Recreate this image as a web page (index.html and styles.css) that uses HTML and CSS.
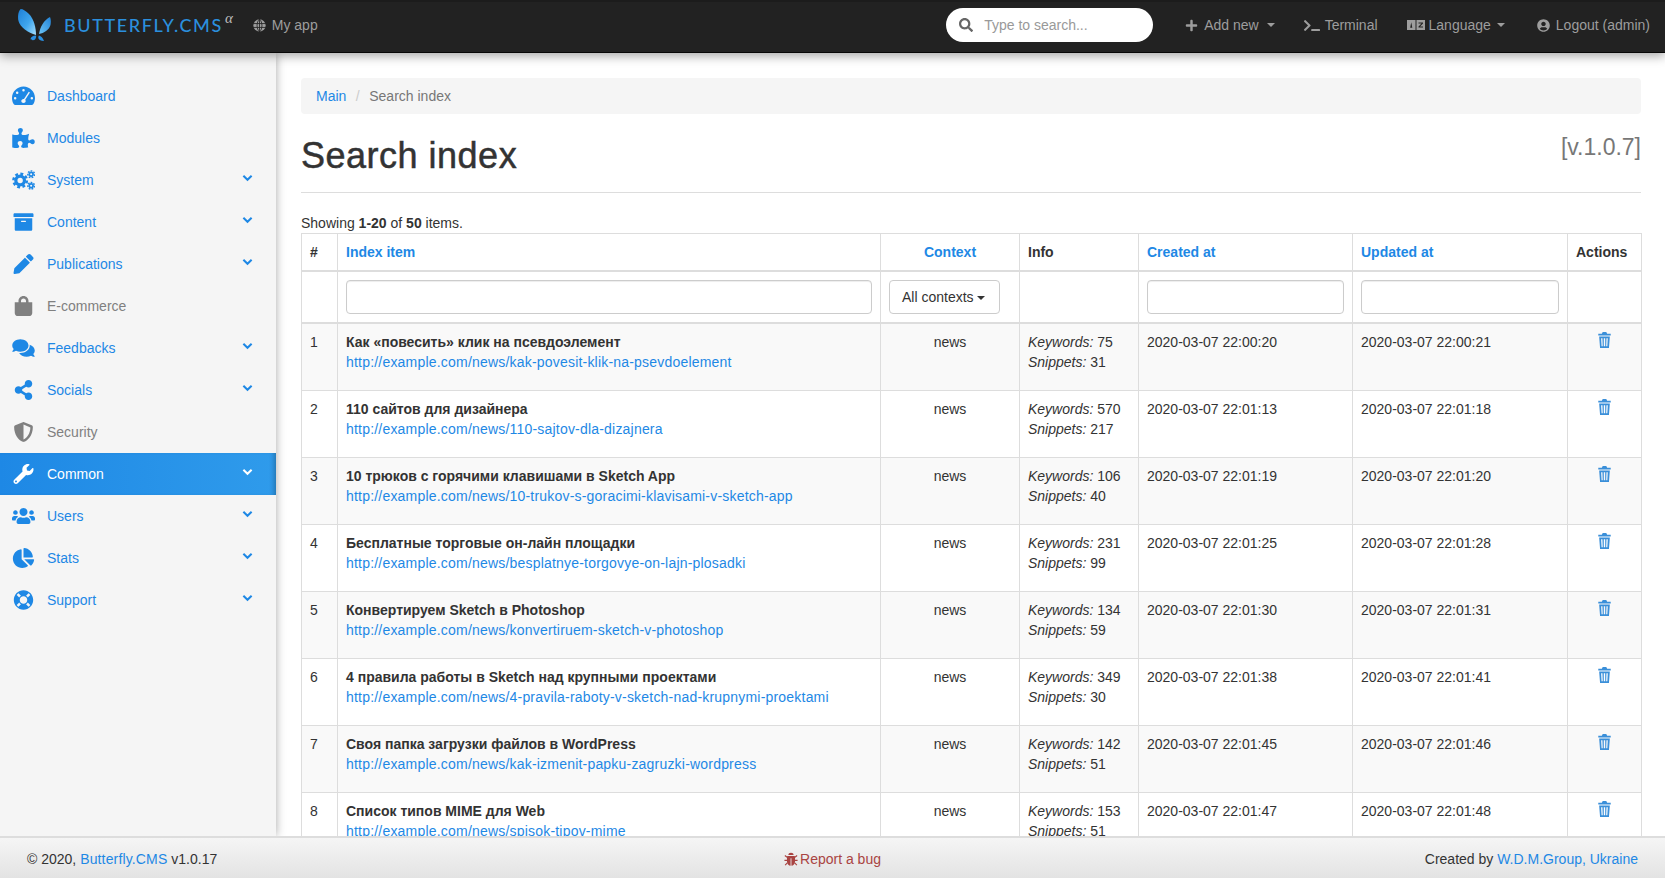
FILE: index.html
```html
<!DOCTYPE html>
<html lang="en">
<head>
    <meta charset="UTF-8">
    <meta name="viewport" content="width=device-width, initial-scale=1.0">
    <title>Search index</title>
    <link rel="stylesheet" href="styles.css">
</head>
<body>
<svg class="sprites" width="0" height="0">
    <defs>
        <linearGradient id="wing" x1="0" y1="0" x2="1" y2="1">
            <stop offset="0" stop-color="#1e7fd6"/>
            <stop offset="0.55" stop-color="#3fa6ee"/>
            <stop offset="1" stop-color="#a5defc"/>
        </linearGradient>
        <linearGradient id="wing2" x1="1" y1="0" x2="0" y2="1">
            <stop offset="0" stop-color="#2183d8"/>
            <stop offset="1" stop-color="#6cc3f5"/>
        </linearGradient>
        <symbol id="i-down" viewBox="0 0 12 8"><polyline points="1.5,1.5 6,6 10.5,1.5" fill="none" stroke="currentColor" stroke-width="2.2"/></symbol>
        <symbol id="i-trash" viewBox="0 0 14 18"><path fill="currentColor" d="M5 0h4l1 2h4v2H0V2h4zM1 5h12l-1 13H2zm2.200 2l.5 9h1.300l-.3-9zm3 0v9h1.600V7zm3 0l-.3 9h1.300l.5-9z"/></symbol>
    </defs>
</svg>

<nav class="navbar">
    <a class="brand" href="#">
        <svg class="brand-logo" viewBox="16 7 38 36">
            <path fill="url(#wing)" d="M20.600 9C18 12 17.500 17 18.500 21C20 27 28 33 36 35C36 28 34 19 29 14C26 11 23 9 20.600 9z"/>
            <path fill="url(#wing2)" d="M50 17C44 20 40 27 39 34C44 33 49 30 50.500 25C51 22 51 19 50 17z"/>
            <path fill="#2a90e2" d="M36 35.500C33 35.500 31 37 30.500 39C31 40.500 34 40.500 35 39.500C36 38 36.500 36.500 36 35.500zM39 35.500C41 36 43 38 44 41C41 41 39 40 38.500 38.500C38 37 38.500 36 39 35.500z"/>
        </svg>
        <span class="brand-name">BUTTERFLY.CMS</span><sup class="brand-alpha">&alpha;</sup>
    </a>
    <a class="nav-link app-link" href="#">
        <svg class="nav-icon globe" viewBox="0 0 20 20"><circle cx="10" cy="10" r="9.500" fill="currentColor"/><path fill="none" stroke="#222" stroke-width="1.300" d="M0 7h20M0 13h20M10 0v20M10 0C5 5 5 15 10 20M10 0c5 5 5 15 0 20"/></svg>
        My app
    </a>
    <form class="nav-search">
        <svg class="search-icon" viewBox="0 0 512 512"><path fill="currentColor" d="M505 442.700L405.300 343c-4.500-4.500-10.600-7-17-7H372c27.600-35.300 44-79.700 44-128C416 93.100 322.900 0 208 0S0 93.100 0 208s93.100 208 208 208c48.300 0 92.700-16.400 128-44v16.300c0 6.400 2.500 12.500 7 17l99.700 99.700c9.400 9.400 24.600 9.400 33.900 0l28.300-28.300c9.400-9.400 9.400-24.600.1-34zM208 336c-70.700 0-128-57.200-128-128 0-70.700 57.200-128 128-128 70.700 0 128 57.200 128 128 0 70.700-57.200 128-128 128z"/></svg>
        <input type="text" placeholder="Type to search...">
    </form>
    <a class="nav-link add-link" href="#">
        <svg class="nav-icon" viewBox="0 0 448 512"><path fill="currentColor" d="M416 208H272V64c0-17.670-14.330-32-32-32h-32c-17.670 0-32 14.330-32 32v144H32c-17.670 0-32 14.330-32 32v32c0 17.670 14.330 32 32 32h144v144c0 17.670 14.330 32 32 32h32c17.670 0 32-14.330 32-32V304h144c17.670 0 32-14.330 32-32v-32c0-17.670-14.330-32-32-32z"/></svg>
        Add new <span class="caret"></span>
    </a>
    <a class="nav-link terminal-link" href="#">
        <svg class="nav-icon terminal" viewBox="0 0 640 512"><path fill="currentColor" d="M257.981 272.971L63.638 467.314c-9.373 9.373-24.569 9.373-33.941 0L7.029 444.647c-9.357-9.357-9.375-24.522-.04-33.901L161.011 256 6.990 101.255c-9.335-9.379-9.317-24.544.04-33.901l22.667-22.667c9.373-9.373 24.569-9.373 33.941 0L257.981 239.030c9.373 9.372 9.373 24.568 0 33.941zM640 456v-32c0-13.255-10.745-24-24-24H312c-13.255 0-24 10.745-24 24v32c0 13.255 10.745 24 24 24h304c13.255 0 24-10.745 24-24z"/></svg>
        Terminal
    </a>
    <a class="nav-link lang-link" href="#">
        <svg class="nav-icon lang" viewBox="0 0 18 10"><path fill="currentColor" fill-rule="evenodd" d="M0 0h8.500v10H0zM3.200 7.800L4.250 2.200 5.300 7.800M9.500 0H18v10H9.500zM11.500 2.500h4.500v1l-3 3h3v1h-4.500v-1l3-3h-3z"/></svg>
        Language <span class="caret"></span>
    </a>
    <a class="nav-link logout-link" href="#">
        <svg class="nav-icon" viewBox="0 0 496 512"><path fill="currentColor" d="M248 8C111 8 0 119 0 256s111 248 248 248 248-111 248-248S385 8 248 8zm0 96c48.600 0 88 39.400 88 88s-39.400 88-88 88-88-39.400-88-88 39.400-88 88-88zm0 344c-58.700 0-111.300-26.600-146.500-68.200 18.800-35.400 55.600-59.800 98.500-59.800 2.400 0 4.800.4 7.100 1.100 13 4.200 26.600 6.900 40.900 6.900 14.300 0 28-2.700 40.900-6.900 2.300-.7 4.700-1.100 7.100-1.100 42.900 0 79.700 24.400 98.500 59.800C359.300 421.400 306.700 448 248 448z"/></svg>
        Logout (admin)
    </a>
</nav>

<div class="wrapper">
    <aside class="sidebar">
        <ul class="side-menu">
            <li><a href="#">
                <svg class="side-icon" viewBox="0 0 24 20"><path fill="currentColor" fill-rule="evenodd" d="M12 0C5.400 0 0 5.400 0 12c0 2.300.6 4.400 1.700 6.300.4.700 1 1.100 1.800 1.100h17c.8 0 1.400-.4 1.800-1.100C23.400 16.400 24 14.300 24 12 24 5.400 18.600 0 12 0zm0 2.600a1.300 1.300 0 1 1 0 2.600 1.300 1.300 0 0 1 0-2.600zM5.400 5.400a1.300 1.300 0 1 1 0 2.600 1.300 1.300 0 0 1 0-2.600zM3.300 11a1.300 1.300 0 1 1 0 2.600 1.300 1.300 0 0 1 0-2.600zm17.400 0a1.300 1.300 0 1 1 0 2.600 1.300 1.300 0 0 1 0-2.600zM17.500 5.500l1.200.8-4.900 7.600c.3.400.5.900.5 1.400 0 1.200-1 2.100-2.300 2.100S9.700 16.500 9.700 15.300s1-2.300 2.300-2.300c.2 0 .3 0 .5.100z"/></svg>
                Dashboard
            </a></li>
            <li><a href="#">
                <svg class="side-icon" viewBox="0 0 576 512"><path fill="currentColor" d="M519.442 288.651c-41.519 0-59.500 31.593-82.058 31.593C377.409 320.244 432 144 432 144s-196.288 80-196.288-3.297c0-35.827 36.288-46.250 36.288-85.985C272 19.216 243.885 0 210.539 0c-34.654 0-66.366 18.891-66.366 56.346 0 41.364 31.711 59.277 31.711 81.750C175.885 207.719 0 166.758 0 166.758v333.237s178.635 41.047 178.635-28.662c0-22.473-40-40.107-40-81.471 0-37.456 29.250-56.346 63.577-56.346 33.673 0 61.788 19.216 61.788 54.717 0 39.735-36.288 50.158-36.288 85.985 0 60.803 129.675 25.730 181.230 25.730 0 0-34.725-120.101 25.827-120.101 35.962 0 46.423 36.152 86.308 36.152C556.712 416 576 387.990 576 354.443c0-33.901-18.962-65.792-56.558-65.792z"/></svg>
                Modules
            </a></li>
            <li class="has-sub"><a href="#">
                <svg class="side-icon" viewBox="0 0 24 20"><g fill="none" stroke="currentColor"><circle cx="8.500" cy="10.500" r="4.500" stroke-width="3.400"/><circle cx="8.500" cy="10.500" r="7" stroke-width="2.600" stroke-dasharray="3 2.500"/><circle cx="20" cy="4" r="2" stroke-width="1.800"/><circle cx="20" cy="4" r="3.500" stroke-width="1.500" stroke-dasharray="1.800 1.300"/><circle cx="20" cy="16" r="2" stroke-width="1.800"/><circle cx="20" cy="16" r="3.500" stroke-width="1.500" stroke-dasharray="1.800 1.300"/></g></svg>
                System
                <svg class="side-arrow"><use href="#i-down"/></svg>
            </a></li>
            <li class="has-sub"><a href="#">
                <svg class="side-icon" viewBox="0 0 512 512"><path fill="currentColor" d="M32 448c0 17.700 14.300 32 32 32h384c17.700 0 32-14.300 32-32V160H32v288zm160-212c0-6.600 5.400-12 12-12h104c6.600 0 12 5.400 12 12v8c0 6.600-5.400 12-12 12H204c-6.600 0-12-5.400-12-12v-8zM480 32H32C14.300 32 0 46.300 0 64v48c0 8.800 7.200 16 16 16h480c8.800 0 16-7.200 16-16V64c0-17.700-14.300-32-32-32z"/></svg>
                Content
                <svg class="side-arrow"><use href="#i-down"/></svg>
            </a></li>
            <li class="has-sub"><a href="#">
                <svg class="side-icon" viewBox="0 0 512 512"><path fill="currentColor" d="M497.900 142.100l-46.100 46.100c-4.700 4.700-12.300 4.700-17 0l-111-111c-4.700-4.700-4.700-12.300 0-17l46.100-46.100c18.700-18.700 49.100-18.700 67.900 0l60.100 60.100c18.800 18.700 18.800 49.100 0 67.900zM284.200 99.800L21.600 362.400.4 483.900c-2.900 16.400 11.400 30.600 27.800 27.800l121.500-21.300 262.600-262.600c4.700-4.700 4.700-12.300 0-17l-111-111c-4.800-4.700-12.400-4.700-17.100 0z"/></svg>
                Publications
                <svg class="side-arrow"><use href="#i-down"/></svg>
            </a></li>
            <li class="muted"><a href="#">
                <svg class="side-icon" viewBox="0 0 448 512"><path fill="currentColor" fill-rule="evenodd" d="M352 160v-32C352 57.420 294.579 0 224 0 153.420 0 96 57.420 96 128v32H0v272c0 44.183 35.817 80 80 80h288c44.183 0 80-35.817 80-80V160h-96zm-192-32c0-35.290 28.710-64 64-64s64 28.710 64 64v32H160v-32z"/></svg>
                E-commerce
            </a></li>
            <li class="has-sub"><a href="#">
                <svg class="side-icon" viewBox="0 0 576 512"><path fill="currentColor" d="M416 192c0-88.400-93.100-160-208-160S0 103.600 0 192c0 34.300 14.100 65.900 38 92-13.400 30.200-35.500 54.200-35.800 54.500-2.200 2.300-2.800 5.700-1.500 8.700S4.800 352 8 352c36.600 0 66.900-12.300 88.700-25 32.200 15.700 70.300 25 111.300 25 114.900 0 208-71.600 208-160zm122 220c23.900-26 38-57.700 38-92 0-66.900-53.500-124.200-129.300-148.100.9 6.600 1.300 13.300 1.300 20.100 0 105.900-107.700 192-240 192-10.800 0-21.300-.8-31.700-1.900C207.800 439.600 281.800 480 368 480c41 0 79.100-9.200 111.300-25 21.800 12.700 52.100 25 88.700 25 3.200 0 6.100-1.900 7.300-4.800 1.300-2.900.7-6.300-1.500-8.700-.3-.3-22.400-24.200-35.800-54.500z"/></svg>
                Feedbacks
                <svg class="side-arrow"><use href="#i-down"/></svg>
            </a></li>
            <li class="has-sub"><a href="#">
                <svg class="side-icon" viewBox="0 0 448 512"><path fill="currentColor" d="M352 320c-22.608 0-43.387 7.819-59.790 20.895l-102.486-64.054a96.551 96.551 0 0 0 0-41.683l102.486-64.054C308.613 184.181 329.392 192 352 192c53.019 0 96-42.981 96-96S405.019 0 352 0s-96 42.981-96 96c0 7.158.79 14.130 2.276 20.841L155.790 180.895C139.387 167.819 118.608 160 96 160c-53.019 0-96 42.981-96 96s42.981 96 96 96c22.608 0 43.387-7.819 59.790-20.895l102.486 64.054A96.301 96.301 0 0 0 256 416c0 53.019 42.981 96 96 96s96-42.981 96-96-42.981-96-96-96z"/></svg>
                Socials
                <svg class="side-arrow"><use href="#i-down"/></svg>
            </a></li>
            <li class="muted"><a href="#">
                <svg class="side-icon" viewBox="0 0 512 512"><path fill="currentColor" d="M466.500 83.700l-192-80a48.150 48.150 0 0 0-36.900 0l-192 80C27.700 91.100 16 108.600 16 128c0 198.500 114.500 335.700 221.500 380.300 11.800 4.900 25.100 4.900 36.900 0C360.100 472.600 496 349.300 496 128c0-19.400-11.700-36.900-29.500-44.300zM256.100 446.300l-.1-381 175.900 73.300c-3.300 151.400-82.100 261.100-175.800 307.700z"/></svg>
                Security
            </a></li>
            <li class="has-sub active"><a href="#">
                <svg class="side-icon" viewBox="0 0 512 512"><path fill="currentColor" d="M507.730 109.100c-2.240-9.030-13.540-12.090-20.120-5.510l-74.360 74.360-67.880-11.310-11.310-67.880 74.360-74.360c6.620-6.620 3.430-17.900-5.660-20.160-47.380-11.740-99.550.91-136.580 37.930-39.640 39.640-50.550 97.100-34.050 147.200L18.740 402.760c-24.990 24.990-24.990 65.510 0 90.500 24.990 24.990 65.510 24.990 90.500 0l213.210-213.210c50.120 16.710 107.470 5.680 147.370-34.220 37.070-37.070 49.700-89.320 37.910-136.730zM64 472c-13.250 0-24-10.750-24-24 0-13.260 10.750-24 24-24s24 10.740 24 24c0 13.250-10.750 24-24 24z"/></svg>
                Common
                <svg class="side-arrow"><use href="#i-down"/></svg>
            </a></li>
            <li class="has-sub"><a href="#">
                <svg class="side-icon" viewBox="0 0 640 512"><path fill="currentColor" d="M96 224c35.300 0 64-28.700 64-64s-28.700-64-64-64-64 28.700-64 64 28.700 64 64 64zm448 0c35.300 0 64-28.700 64-64s-28.700-64-64-64-64 28.700-64 64 28.700 64 64 64zm32 32h-64c-17.600 0-33.500 7.100-45.100 18.600 40.300 22.100 68.900 62 75.100 109.400h66c17.700 0 32-14.300 32-32v-32c0-35.300-28.700-64-64-64zm-256 0c61.900 0 112-50.100 112-112S381.900 32 320 32 208 82.100 208 144s50.100 112 112 112zm76.800 32h-8.300c-20.800 10-43.900 16-68.500 16s-47.600-6-68.500-16h-8.300C179.600 288 128 339.600 128 403.200V432c0 26.500 21.500 48 48 48h288c26.500 0 48-21.500 48-48v-28.800c0-63.600-51.600-115.200-115.200-115.200zm-223.700-13.400C161.500 263.100 145.600 256 128 256H64c-35.300 0-64 28.700-64 64v32c0 17.700 14.300 32 32 32h65.900c6.300-47.400 34.900-87.300 75.200-109.400z"/></svg>
                Users
                <svg class="side-arrow"><use href="#i-down"/></svg>
            </a></li>
            <li class="has-sub"><a href="#">
                <svg class="side-icon" viewBox="0 0 544 512"><path fill="currentColor" d="M527.790 288H290.500l158.030 158.030c6.040 6.040 15.980 6.530 22.190.68 38.700-36.460 65.320-85.610 73.130-140.860 1.340-9.460-6.510-17.850-16.060-17.850zm-15.830-64.800C503.720 103.740 408.260 8.280 288.800.04 279.680-.59 272 7.100 272 16.240V240h223.770c9.140 0 16.820-7.680 16.190-16.800zM224 288V50.710c0-9.550-8.390-17.400-17.840-16.060C86.990 51.490-4.100 155.600.14 280.370 4.500 408.510 114.830 513.590 243.030 511.980c50.400-.63 96.970-16.870 135.260-44.030 7.900-5.600 8.420-17.230 1.570-24.080L224 288z"/></svg>
                Stats
                <svg class="side-arrow"><use href="#i-down"/></svg>
            </a></li>
            <li class="has-sub"><a href="#">
                <svg class="side-icon" viewBox="0 0 512 512"><path fill="currentColor" d="M256 8C119.033 8 8 119.033 8 256s111.033 248 248 248 248-111.033 248-248S392.967 8 256 8zm173.696 119.559l-63.399 63.399c-10.987-18.559-26.670-34.252-45.255-45.255l63.399-63.399a218.396 218.396 0 0 1 45.255 45.255zM256 352c-53.019 0-96-42.981-96-96s42.981-96 96-96 96 42.981 96 96-42.981 96-96 96zM127.559 82.304l63.399 63.399c-18.559 10.987-34.252 26.670-45.255 45.255l-63.399-63.399a218.372 218.372 0 0 1 45.255-45.255zM82.304 384.441l63.399-63.399c10.987 18.559 26.670 34.252 45.255 45.255l-63.399 63.399a218.396 218.396 0 0 1-45.255-45.255zm302.137 45.255l-63.399-63.399c18.559-10.987 34.252-26.670 45.255-45.255l63.399 63.399a218.403 218.403 0 0 1-45.255 45.255z"/></svg>
                Support
                <svg class="side-arrow"><use href="#i-down"/></svg>
            </a></li>
        </ul>
    </aside>

    <main class="content">
        <ol class="breadcrumb">
            <li><a href="#">Main</a></li>
            <li class="current">Search index</li>
        </ol>

        <div class="page-head">
            <h1>Search index</h1>
            <span class="version">[v.1.0.7]</span>
        </div>

        <div class="summary">Showing <b>1-20</b> of <b>50</b> items.</div>

        <table class="grid">
            <colgroup>
                <col class="col-num">
                <col class="col-item">
                <col class="col-context">
                <col class="col-info">
                <col class="col-date">
                <col class="col-date2">
                <col class="col-actions">
            </colgroup>
            <thead>
                <tr>
                    <th>#</th>
                    <th><a href="#">Index item</a></th>
                    <th class="center"><a href="#">Context</a></th>
                    <th>Info</th>
                    <th><a href="#">Created at</a></th>
                    <th><a href="#">Updated at</a></th>
                    <th>Actions</th>
                </tr>
                <tr class="filters">
                    <td></td>
                    <td><input type="text" class="form-control"></td>
                    <td><button type="button" class="btn-drop">All contexts <span class="caret"></span></button></td>
                    <td></td>
                    <td><input type="text" class="form-control"></td>
                    <td><input type="text" class="form-control"></td>
                    <td></td>
                </tr>
            </thead>
            <tbody>
                <tr>
                    <td>1</td>
                    <td><b>Как «повесить» клик на псевдоэлемент</b><p><a href="#">http://example.com/news/kak-povesit-klik-na-psevdoelement</a></p></td>
                    <td class="center">news</td>
                    <td><i>Keywords:</i> 75<br><i>Snippets:</i> 31</td>
                    <td>2020-03-07 22:00:20</td>
                    <td>2020-03-07 22:00:21</td>
                    <td class="center"><a href="#"><svg class="trash"><use href="#i-trash"/></svg></a></td>
                </tr>
                <tr>
                    <td>2</td>
                    <td><b>110 сайтов для дизайнера</b><p><a href="#">http://example.com/news/110-sajtov-dla-dizajnera</a></p></td>
                    <td class="center">news</td>
                    <td><i>Keywords:</i> 570<br><i>Snippets:</i> 217</td>
                    <td>2020-03-07 22:01:13</td>
                    <td>2020-03-07 22:01:18</td>
                    <td class="center"><a href="#"><svg class="trash"><use href="#i-trash"/></svg></a></td>
                </tr>
                <tr>
                    <td>3</td>
                    <td><b>10 трюков с горячими клавишами в Sketch App</b><p><a href="#">http://example.com/news/10-trukov-s-goracimi-klavisami-v-sketch-app</a></p></td>
                    <td class="center">news</td>
                    <td><i>Keywords:</i> 106<br><i>Snippets:</i> 40</td>
                    <td>2020-03-07 22:01:19</td>
                    <td>2020-03-07 22:01:20</td>
                    <td class="center"><a href="#"><svg class="trash"><use href="#i-trash"/></svg></a></td>
                </tr>
                <tr>
                    <td>4</td>
                    <td><b>Бесплатные торговые он-лайн площадки</b><p><a href="#">http://example.com/news/besplatnye-torgovye-on-lajn-plosadki</a></p></td>
                    <td class="center">news</td>
                    <td><i>Keywords:</i> 231<br><i>Snippets:</i> 99</td>
                    <td>2020-03-07 22:01:25</td>
                    <td>2020-03-07 22:01:28</td>
                    <td class="center"><a href="#"><svg class="trash"><use href="#i-trash"/></svg></a></td>
                </tr>
                <tr>
                    <td>5</td>
                    <td><b>Конвертируем Sketch в Photoshop</b><p><a href="#">http://example.com/news/konvertiruem-sketch-v-photoshop</a></p></td>
                    <td class="center">news</td>
                    <td><i>Keywords:</i> 134<br><i>Snippets:</i> 59</td>
                    <td>2020-03-07 22:01:30</td>
                    <td>2020-03-07 22:01:31</td>
                    <td class="center"><a href="#"><svg class="trash"><use href="#i-trash"/></svg></a></td>
                </tr>
                <tr>
                    <td>6</td>
                    <td><b>4 правила работы в Sketch над крупными проектами</b><p><a href="#">http://example.com/news/4-pravila-raboty-v-sketch-nad-krupnymi-proektami</a></p></td>
                    <td class="center">news</td>
                    <td><i>Keywords:</i> 349<br><i>Snippets:</i> 30</td>
                    <td>2020-03-07 22:01:38</td>
                    <td>2020-03-07 22:01:41</td>
                    <td class="center"><a href="#"><svg class="trash"><use href="#i-trash"/></svg></a></td>
                </tr>
                <tr>
                    <td>7</td>
                    <td><b>Своя папка загрузки файлов в WordPress</b><p><a href="#">http://example.com/news/kak-izmenit-papku-zagruzki-wordpress</a></p></td>
                    <td class="center">news</td>
                    <td><i>Keywords:</i> 142<br><i>Snippets:</i> 51</td>
                    <td>2020-03-07 22:01:45</td>
                    <td>2020-03-07 22:01:46</td>
                    <td class="center"><a href="#"><svg class="trash"><use href="#i-trash"/></svg></a></td>
                </tr>
                <tr>
                    <td>8</td>
                    <td><b>Список типов MIME для Web</b><p><a href="#">http://example.com/news/spisok-tipov-mime</a></p></td>
                    <td class="center">news</td>
                    <td><i>Keywords:</i> 153<br><i>Snippets:</i> 51</td>
                    <td>2020-03-07 22:01:47</td>
                    <td>2020-03-07 22:01:48</td>
                    <td class="center"><a href="#"><svg class="trash"><use href="#i-trash"/></svg></a></td>
                </tr>
            </tbody>
        </table>
    </main>
</div>

<footer class="footer">
    <div class="foot-left">&copy; 2020, <a href="#">Butterfly.CMS</a> v1.0.17</div>
    <a class="foot-bug" href="#">
        <svg class="bug-icon" viewBox="0 0 16 16"><path fill="currentColor" d="M5 3.500C5 1.800 6.300.8 8 .8s3 1 3 2.700zM4.200 4.500h7.600c.5 0 .8.400.8.800V11c0 2.600-2 4.400-4.100 4.600V7H7.500v8.600C5.400 15.400 3.400 13.600 3.400 11V5.300c0-.4.300-.8.800-.8z"/><path fill="none" stroke="currentColor" stroke-width="1.300" d="M3.500 6L1 4M12.500 6L15 4M3.500 9.500H.5M12.500 9.500h3M3.800 12.500L1.300 15M12.200 12.500l2.500 2.500"/></svg>Report a bug
    </a>
    <div class="foot-right">Created by <a href="#">W.D.M.Group, Ukraine</a></div>
</footer>
</body>
</html>
```

FILE: styles.css
```css
* {
    box-sizing: border-box;
}
html,
body {
    height: 100%;
}
body {
    margin: 0;
    display: flex;
    flex-direction: column;
    overflow: hidden;
    font-family: 'Liberation Sans', Arial, sans-serif;
    font-size: 14px;
    line-height: 20px;
    color: #333;
    background-color: #fff;
}
a {
    color: #1e88e5;
    text-decoration: none;
}
.sprites {
    position: absolute;
}

/* top bar */
.navbar {
    position: relative;
    z-index: 3;
    flex: 0 0 53px;
    display: flex;
    align-items: center;
    padding: 0 15px 2px 0;
    background-color: #222;
    border-bottom: 1px solid #080808;
    box-shadow: inset 0 2px 0 #1c1c1c, 0 3px 10px rgba(0, 0, 0, 0.35);
}
.brand {
    display: flex;
    align-items: center;
    margin-left: 16px;
    color: #2b8fdd;
}
.brand-logo {
    width: 38px;
    height: 36px;
    margin-right: 10px;
}
.brand-name {
    font-family: Lato, 'Liberation Sans', sans-serif;
    font-size: 18px;
    font-weight: 500;
    letter-spacing: 1.6px;
}
.brand-alpha {
    align-self: flex-start;
    margin: 1px 0 0 2px;
    font-family: 'Liberation Serif', serif;
    font-size: 15px;
    font-style: italic;
    color: #bbb;
}
.nav-link {
    display: flex;
    align-items: center;
    white-space: nowrap;
    color: #9d9d9d;
}
.nav-icon {
    width: 13px;
    height: 13px;
    margin-right: 6px;
}
.app-link {
    margin-left: 20px;
}
.nav-search {
    position: relative;
    width: 207px;
    height: 34px;
    margin-left: auto;
}
.nav-search input {
    width: 100%;
    height: 100%;
    padding: 0 16px 0 38px;
    border: 0;
    border-radius: 17px;
    font: inherit;
    color: #555;
    background-color: #fff;
}
.nav-search input::placeholder {
    color: #999;
}
.search-icon {
    position: absolute;
    left: 13px;
    top: 10px;
    width: 14px;
    height: 14px;
    color: #666;
}
.add-link {
    margin-left: 32px;
}
.add-link .caret {
    margin-left: 8px;
}
.terminal-link {
    margin-left: 29px;
}
.terminal {
    width: 16px;
    height: 13px;
    margin-right: 5px;
}
.lang-link {
    margin-left: 29px;
}
.lang {
    width: 18px;
    height: 10px;
    margin-right: 4px;
}
.logout-link {
    margin-left: 32px;
}
.caret {
    display: inline-block;
    width: 0;
    height: 0;
    margin-left: 6px;
    border-top: 4px solid currentColor;
    border-left: 4px solid transparent;
    border-right: 4px solid transparent;
}

/* layout */
.wrapper {
    flex: 1;
    display: flex;
    min-height: 0;
}
.sidebar {
    position: relative;
    z-index: 2;
    flex: 0 0 276px;
    padding-top: 22px;
    background-color: #f5f5f5;
    box-shadow: 0 0 9px rgba(0, 0, 0, 0.35);
}
.side-menu {
    list-style: none;
    margin: 0;
    padding: 0;
}
.side-menu a {
    position: relative;
    display: flex;
    align-items: center;
    height: 42px;
    padding-left: 12px;
}
.side-icon {
    flex: 0 0 23px;
    height: 20px;
    margin-right: 12px;
}
.side-arrow {
    position: absolute;
    left: 242px;
    top: 15px;
    width: 11px;
    height: 8px;
}
.muted a {
    color: #808080;
}
.active a {
    color: #fff;
    background: linear-gradient(to right, #1e88e5, #2f9beb);
    box-shadow: inset -5px 0 5px -3px rgba(0, 0, 0, 0.25);
}
.content {
    flex: 1;
    min-width: 0;
    padding: 25px 24px 0 25px;
    overflow: hidden;
}
.breadcrumb {
    display: flex;
    list-style: none;
    margin: 0 0 22px;
    padding: 8px 15px;
    border-radius: 4px;
    background-color: #f5f5f5;
}
.breadcrumb .current {
    color: #777;
}
.breadcrumb .current::before {
    content: "/";
    padding: 0 9.5px;
    color: #ccc;
}
.page-head {
    display: flex;
    justify-content: space-between;
    height: 57px;
    margin-bottom: 20px;
    border-bottom: 1px solid #ddd;
}
.page-head h1 {
    margin: 0;
    font-size: 36px;
    font-weight: 400;
    line-height: 40px;
    letter-spacing: 0.5px;
    -webkit-text-stroke: 0.5px #333;
}
.version {
    font-size: 23px;
    line-height: 22px;
    color: #777;
}
.summary {
    height: 20px;
}

/* table */
.grid {
    width: 1340px;
    table-layout: fixed;
    border-collapse: collapse;
}
.col-num {
    width: 36px;
}
.col-item {
    width: 543px;
}
.col-context {
    width: 139px;
}
.col-info {
    width: 119px;
}
.col-date {
    width: 214px;
}
.col-date2 {
    width: 215px;
}
.col-actions {
    width: 74px;
}
.grid th,
.grid td {
    padding: 8px;
    border: 1px solid #ddd;
    text-align: left;
    vertical-align: top;
}
.grid thead th,
.grid .filters td {
    border-bottom-width: 2px;
}
.grid .center {
    text-align: center;
}
.grid p {
    margin: 0 0 10px;
    letter-spacing: 0.2px;
}
.grid tbody tr:nth-child(odd) {
    background-color: #f9f9f9;
}
.form-control {
    display: block;
    width: 100%;
    height: 34px;
    padding: 6px 12px;
    border: 1px solid #ccc;
    border-radius: 4px;
    box-shadow: inset 0 1px 1px rgba(0, 0, 0, 0.075);
    background-color: #fff;
}
.btn-drop {
    width: 111px;
    height: 34px;
    padding: 6px 0 6px 12px;
    border: 1px solid #ccc;
    border-radius: 4px;
    font: inherit;
    text-align: left;
    white-space: nowrap;
    color: #333;
    background-color: #fff;
}
.btn-drop .caret {
    margin-left: 0;
    vertical-align: middle;
}
.trash {
    display: block;
    width: 13px;
    height: 16px;
    margin: 0 auto;
    color: #3a8fd9;
}

/* bottom bar */
.footer {
    position: relative;
    z-index: 3;
    flex: 0 0 42px;
    display: grid;
    grid-template-columns: 1fr auto 1fr;
    align-items: center;
    padding: 1px 27px 0;
    border-top: 2px solid #ddd;
    background: linear-gradient(to bottom, #f5f5f5, #e3e3e3);
}
.foot-left a {
    letter-spacing: 0.15px;
}
.foot-bug {
    display: flex;
    align-items: center;
    color: #a94442;
}
.bug-icon {
    width: 14px;
    height: 14px;
    margin-right: 2px;
}
.foot-right {
    text-align: right;
}
```
